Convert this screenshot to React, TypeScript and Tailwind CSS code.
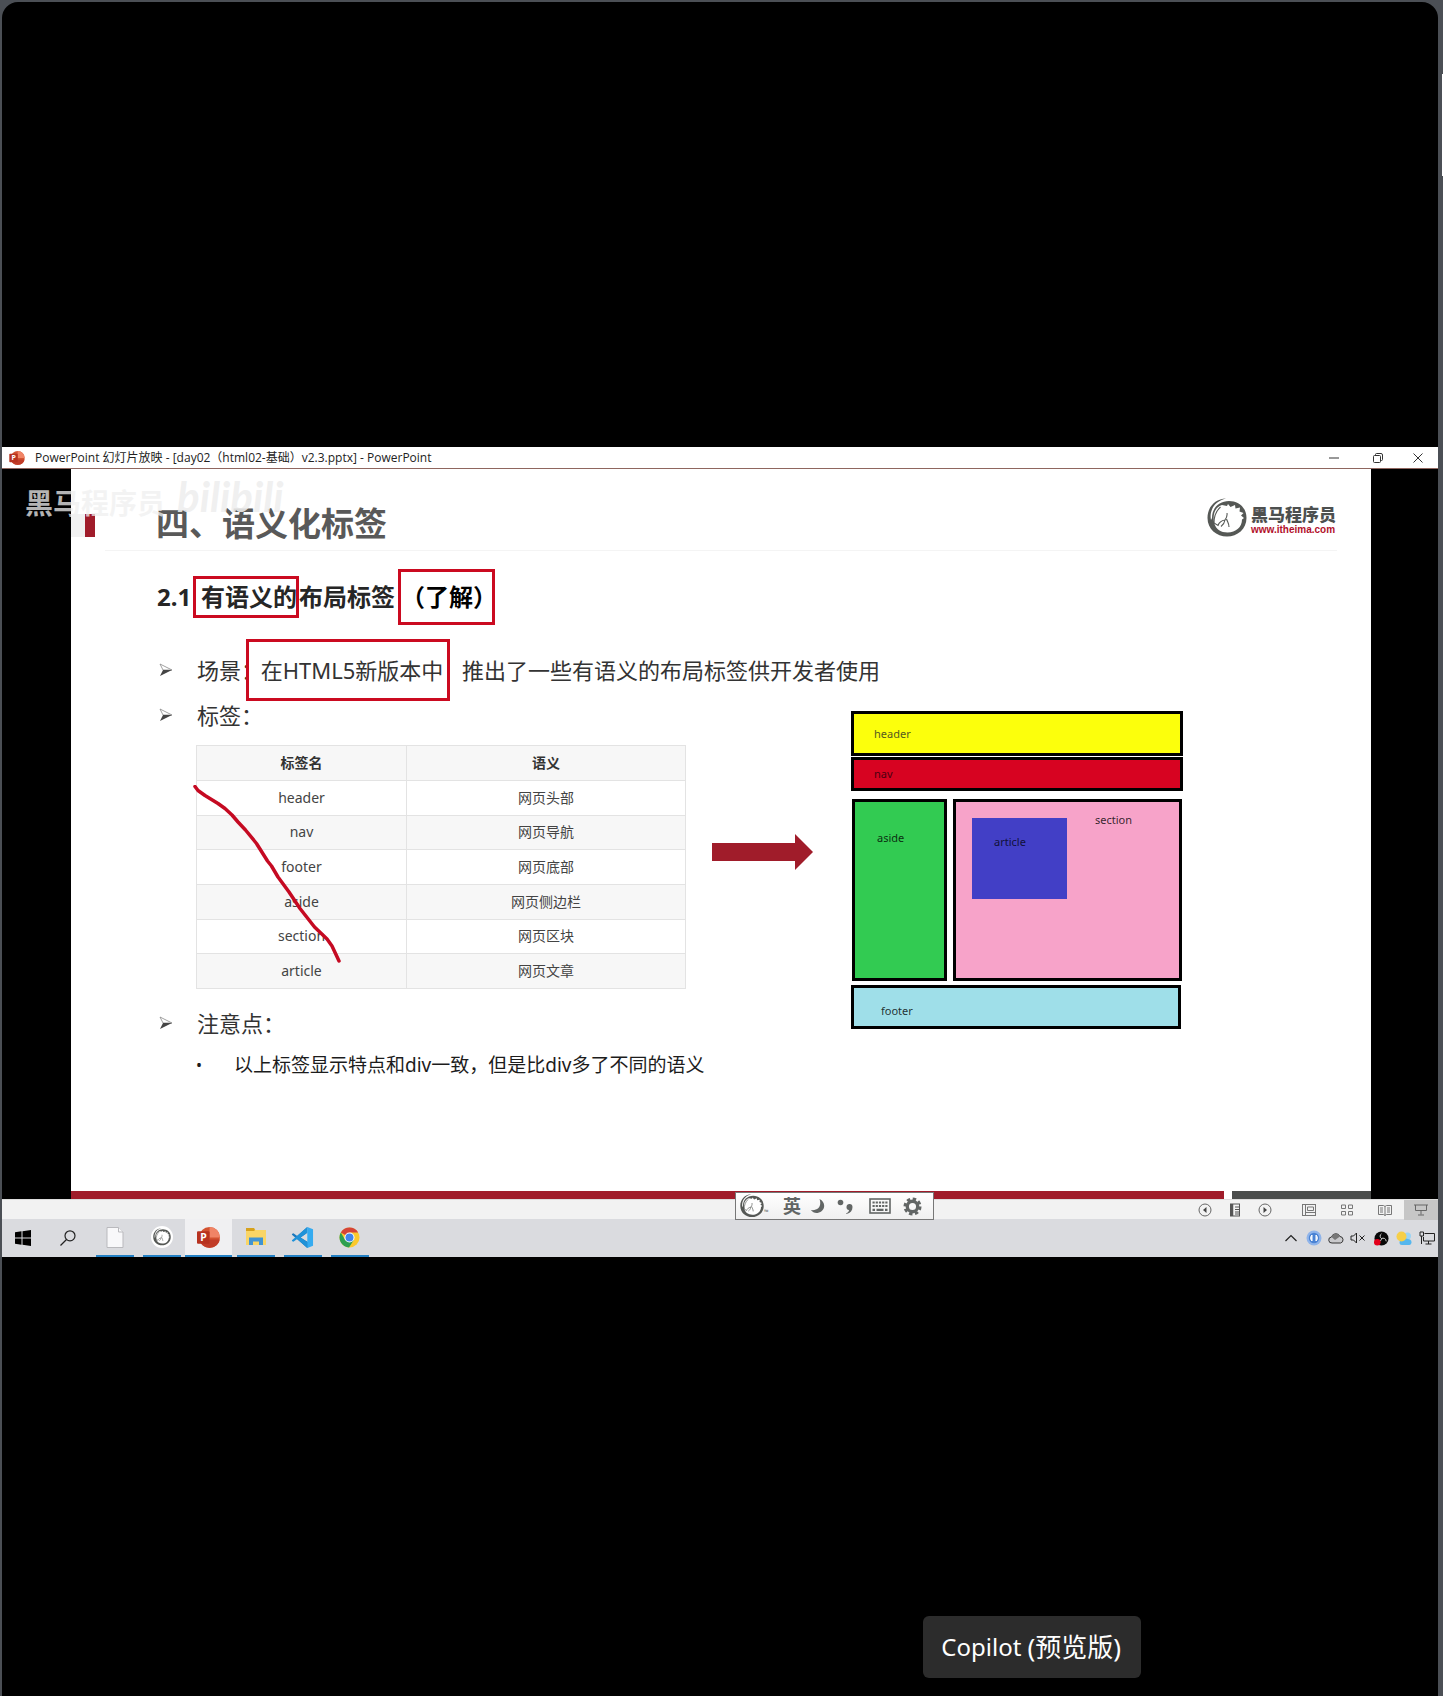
import React from 'react';

const tags = [
  ['header', '网页头部'],
  ['nav', '网页导航'],
  ['footer', '网页底部'],
  ['aside', '网页侧边栏'],
  ['section', '网页区块'],
  ['article', '网页文章'],
];

function HorseMark({ className }: { className: string }) {
  return (
    <svg viewBox="0 0 40 40" className={className} fill="none" aria-hidden="true">
      <path d="M19 .5C8 1 .5 9 .5 20c0 11 9 18.500 19.500 18.500S39.500 31 39.500 20 31 3 22 3C12 3 5 10 5 20l-1 2C2 12 8 3 19 .5Z" fill="#555855" />
      <path d="M7.500 26C5 17 8 9 15 7l5 1 1-2 2.500 3L28 7l.5 3.500L33 9.500l-.5 4 4 1.500-2.500 2.500 3 2.500-2 1.500C35 29 29 34.500 20.500 34.500 14 34.500 9 31 7.500 26Z" fill="#fff" />
      <path d="M13.500 9C9 13 7 19 7 25l4 2.500c1-3 3.500-5 7-5.500M20 15c.5 3-.5 5-2 7-.5 3-2 5-4 6.500M19.500 21c1 3 2.500 4.500 2.500 8" stroke="#555855" strokeWidth="1.100" />
    </svg>
  );
}

function PptIcon({ className }: { className: string }) {
  return (
    <svg viewBox="0 0 22 20" className={className} aria-hidden="true">
      <circle cx="12" cy="10" r="10" fill="#d35230" />
      <path d="M12 0a10 10 0 0 1 10 10H12Z" fill="#f08466" />
      <path d="M2.3 12h19.5A10 10 0 0 1 2.3 12Z" fill="#c13c28" />
      <rect x="0" y="4" width="12" height="12" rx="1" fill="#b7321f" />
      <text x="3" y="13.5" fontSize="10" fontWeight="700" fill="#fff" fontFamily="Noto Sans, sans-serif">P</text>
    </svg>
  );
}

function Arrowhead() {
  return (
    <svg viewBox="0 0 14 14" className="h-3.5 w-3.5" aria-hidden="true">
      <path d="M1 1 13 7 4 7Z" fill="#fff" stroke="#888" strokeWidth="0.8" />
      <path d="M4 7h9L1 13Z" fill="#444" />
    </svg>
  );
}

function Bullet({ children }: { children: React.ReactNode }) {
  return (
    <>
      <span className="flex w-10 shrink-0 items-center pl-0.5"><Arrowhead /></span>
      {children}
    </>
  );
}

function TitleBar() {
  return (
    <header className="flex h-[22px] items-center border-b border-[#8f665f] bg-white text-[#222]">
      <PptIcon className="ml-[7px] h-3.5 w-4" />
      <h1 className="ml-2.5 flex-1 truncate font-['Open_Sans','Noto_Sans_CJK_SC',sans-serif] text-[12px] leading-5">PowerPoint 幻灯片放映 - [day02（html02-基础）v2.3.pptx] - PowerPoint</h1>
      <button aria-label="最小化" className="flex h-5 w-11 items-center justify-center">
        <svg viewBox="0 0 10 10" className="h-2.5 w-2.5" stroke="#333" fill="none"><path d="M0 5h10" /></svg>
      </button>
      <button aria-label="还原" className="flex h-5 w-[43px] items-center justify-center">
        <svg viewBox="0 0 10 10" className="h-2.5 w-2.5" stroke="#333" fill="none"><rect x=".5" y="2.5" width="7" height="7" rx="1" /><path d="M2.5 2.5V1.500a1 1 0 0 1 1-1H8a1.500 1.500 0 0 1 1.500 1.500v4.500a1 1 0 0 1-1 1h-1" /></svg>
      </button>
      <button aria-label="关闭" className="mr-px flex h-5 w-[38px] items-center justify-center">
        <svg viewBox="0 0 10 10" className="h-2.5 w-2.5" stroke="#333" fill="none"><path d="m.5.5 9 9m0-9-9 9" /></svg>
      </button>
    </header>
  );
}

function TagTable() {
  return (
    <table className="h-[244px] w-[490px] table-fixed border-collapse text-center text-[14px] leading-5 text-[#444]">
      <thead>
        <tr className="h-[35px] bg-[#f7f7f7] text-[#333]">
          <th className="w-[210px] border border-[#e3e3e3] p-0 font-bold">标签名</th>
          <th className="border border-[#e3e3e3] p-0 font-bold">语义</th>
        </tr>
      </thead>
      <tbody>
        {tags.map(([tag, meaning]) => (
          <tr key={tag} className="h-[34px] even:bg-[#f7f7f7]">
            <td className="border border-[#e3e3e3] p-0">{tag}</td>
            <td className="border border-[#e3e3e3] p-0">{meaning}</td>
          </tr>
        ))}
      </tbody>
    </table>
  );
}

function LayoutDiagram() {
  return (
    <div className="mt-3 flex w-[332px] shrink-0 flex-col text-[11px] leading-4 text-black/80">
      <div className="flex h-[45px] items-center border-3 border-black bg-[#fcff0c] pl-5 text-[#555a20]">header</div>
      <div className="mt-px flex h-[34px] items-center border-3 border-black bg-[#d70321] pl-5 text-[#4a0010]">nav</div>
      <div className="mt-2 flex h-[182px] gap-1.5 px-px">
        <div className="w-[95px] border-3 border-black bg-[#32cb52] pt-7 pl-[22px]">aside</div>
        <div className="flex flex-1 border-3 border-black bg-[#f7a3c9] pl-4">
          <div className="mt-4 h-[81px] w-[95px] bg-[#423fc6] pt-4 pl-[22px] text-[#111138]">article</div>
          <div className="mt-2.5 ml-7 h-5">section</div>
        </div>
      </div>
      <div className="mt-1 mr-0.5 flex h-11 items-center border-3 border-black bg-[#9fdfe9] pt-2 pl-[27px]">footer</div>
    </div>
  );
}

function Slide() {
  return (
    <main className="bg-black pr-[67px] pl-[69px]">
      <div className="relative bg-white text-[#333]">
        <div className="flex h-[81px] items-center">
          <div className="mt-[45px] flex h-[23px] w-[85px] self-start">
            <span className="w-3.5 bg-[#f1f1f1]" />
            <span className="w-2.5 bg-[#a01c2a]" />
          </div>
          <h2 className="flex-1 pt-7 text-[33px] leading-10 font-bold text-[#595959]">四、语义化标签</h2>
          <a href="#home" className="mr-[35px] flex items-center gap-1 pt-4">
            <HorseMark className="h-10 w-10" />
            <span className="flex flex-col pt-1">
              <span className="text-[17px] leading-5 font-black text-[#4d504f]">黑马程序员</span>
              <span className="font-['Liberation_Sans'] text-[10px] leading-2.5 font-bold text-[#b2102b]">www.itheima.com</span>
            </span>
          </a>
        </div>
        <div className="mr-[34px] ml-[34px] h-px bg-[#f4f4f4]" />

        <div className="pl-[86px]">
          <h3 className="flex h-[91px] items-center text-[24px] leading-8 font-bold text-[#262626]">
            <span className="w-11">2.1</span>
            <span className="relative">
              有语义的
              <span className="absolute -inset-y-[5px] -right-0.5 -left-2 border-3 border-[#cb0a20]" />
            </span>
            <span className="ml-0.5">布局标签</span>
            <span className="ml-[3px] flex h-14 w-[97px] items-center justify-center border-3 border-[#cb0a20] text-black"><span>（了解）</span></span>
          </h3>

          <p className="flex h-[55px] items-center text-[22px] leading-8">
            <Bullet>
              <span className="w-[49px] whitespace-nowrap">场景：</span>
              <span className="relative flex h-[62px] w-[204px] shrink-0 items-center justify-center border-3 border-[#cb0a20] bg-white whitespace-nowrap"><span className="pl-2">在HTML5新版本中</span></span>
              <span className="ml-3 whitespace-nowrap">推出了一些有语义的布局标签供开发者使用</span>
            </Bullet>
          </p>

          <div className="mt-0.5 flex items-start">
            <div className="w-[555px] shrink-0 pb-28">
              <p className="flex h-8 items-center text-[22px]"><Bullet>标签：</Bullet></p>
              <div className="relative mt-3.5 ml-[39px]">
                <TagTable />
                <svg viewBox="0 0 148 180" className="absolute top-10 -left-[3px] h-[180px] w-[148px]" fill="none" aria-hidden="true">
                  <path d="M2 1.500 5 5.500 12 10.500 25 18.500 32 23.500 39 30 45 37 52.500 45 63.500 58.500 74.500 76 78.500 81 85 92 96 107 107 123.500 121.500 142 134 154 139 161 146 176" stroke="#c50a22" strokeWidth="3.500" strokeLinecap="round" strokeLinejoin="round" />
                </svg>
              </div>
              <p className="mt-[18px] flex h-8 items-center text-[22px]"><Bullet>注意点：</Bullet></p>
              <p className="mt-3 flex h-7 items-center pl-[39px] text-[19px] leading-7 whitespace-nowrap text-[#1c1c1c]">
                <span className="w-[38px] text-[16px]">•</span>
                以上标签显示特点和div一致，但是比div多了不同的语义
              </p>
            </div>
            <svg viewBox="0 0 101 36" className="mt-[135px] mr-[38px] h-9 w-[101px] shrink-0" aria-hidden="true">
              <path d="M0 9h83V0l18 18-18 18v-9H0Z" fill="#a01c2a" />
            </svg>
            <LayoutDiagram />
          </div>
        </div>

        <div className="flex h-2 gap-2">
          <span className="flex-1 bg-[#a01c2a]" />
          <span className="w-[139px] bg-[#4c4e4d]" />
        </div>

        <div className="absolute top-1 -left-[46px] flex items-center gap-3 whitespace-nowrap">
          <span className="pt-3.5 text-[28px] leading-8 font-bold text-[#f0f0f0]/75">黑马程序员</span>
          <span className="font-['Lato'] text-[42px] leading-10 font-bold text-[#eeeeee]/90 italic">bilibili</span>
        </div>
      </div>
    </main>
  );
}

const viewBtn = 'flex h-5 items-center justify-center';

function StatusBar() {
  return (
    <div className="flex h-5 items-center justify-end border-t border-[#ddd] bg-[#f2f2f2]">
      <button aria-label="上一张" className={viewBtn + ' w-[30px]'}>
        <svg viewBox="0 0 14 14" className="h-3.5 w-3.5" stroke="#666" fill="none"><circle cx="7" cy="7" r="6" /><path d="M8.500 4v6L5 7Z" fill="#444" stroke="none" /></svg>
      </button>
      <button aria-label="菜单" className={viewBtn + ' w-[30px]'}>
        <svg viewBox="0 0 12 14" className="h-3.5 w-3" stroke="#555" fill="none"><rect x="1.500" y="1" width="9" height="12" /><path d="M3 1v12" strokeWidth="2.500" /><path d="M6 4h4M6 6.500h4M6 9h4M6 11h4" /></svg>
      </button>
      <button aria-label="下一张" className={viewBtn + ' w-[30px]'}>
        <svg viewBox="0 0 14 14" className="h-3.5 w-3.5" stroke="#666" fill="none"><circle cx="7" cy="7" r="6" /><path d="M5.500 4v6L9 7Z" fill="#444" stroke="none" /></svg>
      </button>
      <button aria-label="普通视图" className={viewBtn + ' ml-[10px] w-[38px]'}>
        <svg viewBox="0 0 14 12" className="h-3 w-3.5" stroke="#777" fill="none"><rect x=".5" y=".5" width="13" height="11" /><path d="M3.500.5v11M3.500 8.500h10M5.500 3h6v3.500h-6Z" /></svg>
      </button>
      <button aria-label="幻灯片浏览" className={viewBtn + ' w-[38px]'}>
        <svg viewBox="0 0 12 12" className="h-3 w-3" stroke="#777" fill="none"><path d="M.5 1h4v3.500h-4ZM7.500 1h4v3.500h-4ZM.5 7.500h4V11h-4ZM7.500 7.500h4V11h-4Z" /></svg>
      </button>
      <button aria-label="阅读视图" className={viewBtn + ' w-[38px]'}>
        <svg viewBox="0 0 14 12" className="h-3 w-3.5" stroke="#777" fill="none"><path d="M.5 1.500h5L7 2.500l1.500-1h5v9h-5l-1.500 1-1.500-1h-5ZM7 2.500v9M2 4h3M2 6h3M2 8h3M9 4h3M9 6h3M9 8h3" /></svg>
      </button>
      <button aria-label="幻灯片放映" className={viewBtn + ' w-[34px] bg-[#c6c6c6]'}>
        <svg viewBox="0 0 14 12" className="h-3 w-3.5" stroke="#666" fill="none"><path d="M0 1h14M1.500 1v5.500h11V1M7 6.500v4M4 11h6" /></svg>
      </button>
    </div>
  );
}

function TaskButton({ label, active, children }: { label: string; active?: boolean; children: React.ReactNode }) {
  return (
    <button aria-label={label} className={active ? 'flex h-[38px] w-[47px] flex-col items-center bg-[#f0f0f2]' : 'flex h-[38px] w-[47px] flex-col items-center'}>
      <span className="flex flex-1 items-center justify-center">{children}</span>
      <span className={active ? 'h-0.5 w-full bg-[#2380c4]' : 'h-0.5 w-[38px] bg-[#2380c4]'} />
    </button>
  );
}

function Taskbar() {
  return (
    <footer className="flex h-[38px] items-center bg-[#dadbdf]">
      <button aria-label="开始" className="flex h-full w-[42px] items-center justify-center">
        <svg viewBox="0 0 16 16" className="h-4 w-4" fill="#000"><path d="M0 2.300 6.500 1.300V7.500H0ZM7.500 1.200 16 0v7.500H7.500ZM0 8.500h6.500v6.200L0 13.700ZM7.500 8.500H16V16l-8.500-1.200Z" /></svg>
      </button>
      <button aria-label="搜索" className="flex h-full w-[47px] items-center justify-center">
        <svg viewBox="0 0 16 16" className="h-4 w-4" fill="none" stroke="#222" strokeWidth="1.200"><circle cx="10" cy="5.800" r="5" /><path d="M6.500 9.500.5 15.500" /></svg>
      </button>
      <TaskButton label="文档">
        <svg viewBox="0 0 18 21" className="h-[21px] w-[18px]" fill="#f8f8fa" stroke="#b9b9bd"><path d="M1 .5h11.500L17 5v15.500H1Z" /><path d="M12.500.5V5H17" /></svg>
      </TaskButton>
      <TaskButton label="黑马">
        <span className="flex h-[22px] w-[22px] items-center justify-center rounded-full bg-white"><HorseMark className="h-[18px] w-[18px]" /></span>
      </TaskButton>
      <TaskButton label="PowerPoint" active><PptIcon className="h-[21px] w-[23px]" /></TaskButton>
      <TaskButton label="文件资源管理器">
        <svg viewBox="0 0 22 20" className="h-5 w-[22px]"><path d="M1 1h8l1.500 2H21v15H1Z" fill="#f9d566" /><path d="M1 1h8l1 2-1 1H1Z" fill="#d6a11d" /><path d="M4 18v-7.500h14V18h-4v-3.500H8V18Z" fill="#3f93d3" /></svg>
      </TaskButton>
      <TaskButton label="Visual Studio Code">
        <svg viewBox="0 0 24 24" className="h-[23px] w-[23px]"><path d="M17 1 6.500 10.500 2.500 7.500 1 8.300v.9L17 23l1-1V17L10 12l7-5Z" fill="#1b78bd" /><path d="M17 23 6.500 13.500 2.500 16.500 1 15.700v-.9L17 1v6L10 12l7 5Z" fill="#2092d8" /><path d="m17 1 6 2.500v17L17 23Z" fill="#35abf0" /></svg>
      </TaskButton>
      <TaskButton label="Chrome">
        <svg viewBox="0 0 22 22" className="h-[21px] w-[21px]"><circle cx="11" cy="11" r="10.500" fill="#fbc92d" /><path d="M11 11 1.900 5.800A10.500 10.500 0 0 1 20.100 5.800H11Z" fill="#d54437" /><path d="M1.900 5.800A10.500 10.500 0 0 0 10.500 21.500L15.500 13.600 11 11 6.500 13.600Z" fill="#2d9f51" /><circle cx="11" cy="11" r="5.300" fill="#fff" /><circle cx="11" cy="11" r="4.200" fill="#4285ec" /></svg>
      </TaskButton>

      <div className="ml-auto flex h-full items-center">
        <button aria-label="显示隐藏的图标" className="flex w-[23px] justify-center">
          <svg viewBox="0 0 12 12" className="h-3 w-3" fill="none" stroke="#222" strokeWidth="1.200"><path d="m.5 9 5.500-5.500L11.500 9" /></svg>
        </button>
        <button aria-label="暂停" className="flex w-[23px] justify-center">
          <svg viewBox="0 0 16 16" className="h-4 w-4"><circle cx="8" cy="8" r="7.500" fill="#8fb4ea" /><circle cx="8" cy="8" r="5.200" fill="#4a83d4" /><path d="M6 5v6a4 4 0 0 1 0-6ZM10 5v6a4 4 0 0 0 0-6Z" fill="#dbe8fb" stroke="#fff" /></svg>
        </button>
        <button aria-label="云同步" className="flex w-[22px] justify-center">
          <svg viewBox="0 0 16 12" className="h-3 w-4"><path d="M4 11a3 3 0 0 1-.5-6A4.500 4.500 0 0 1 12 4.500 3.300 3.300 0 0 1 12.500 11Z" fill="#c9c9cc" stroke="#333" /><path d="M3.500 5A4.500 4.500 0 0 1 12 4.500L7 8Z" fill="#777" /></svg>
        </button>
        <button aria-label="静音" className="flex w-[22px] justify-center">
          <svg viewBox="0 0 16 12" className="h-3 w-4" fill="none" stroke="#222"><path d="M1 4h2.500L6.500 1v10L3.500 8H1ZM9.500 3.500l5 5m0-5-5 5" /></svg>
        </button>
        <button aria-label="录制" className="flex w-6 justify-center">
          <svg viewBox="0 0 16 16" className="h-[15px] w-[15px]"><circle cx="8" cy="8" r="7.500" fill="#080808" /><path d="M8 8c-2-1-2-4 0-5M8 8c2-1 5 0 5 3M8 8c0 2-2 4-4 3" stroke="#ddd" fill="none" /><circle cx="3.500" cy="12" r="3.500" fill="#e3001b" /></svg>
        </button>
        <button aria-label="天气" className="flex w-[22px] justify-center">
          <svg viewBox="0 0 16 16" className="h-4 w-4"><circle cx="11.500" cy="6" r="3.500" fill="#9bd4f5" /><path d="M6 15a2.500 2.500 0 0 1 0-5l4-1.500 4 1a3 3 0 0 1-.5 5.500Z" fill="#55b7ee" /><circle cx="5.500" cy="6.500" r="5" fill="#f6cf48" /></svg>
        </button>
        <button aria-label="网络" className="flex w-[23px] justify-center">
          <svg viewBox="0 0 16 14" className="h-3.5 w-4" fill="none" stroke="#222"><path d="M5.500 2.500h10v7.500h-11V6M9.500 10v3M6.500 13h6M1 1h3.500v4H1ZM2.500 5v8" /></svg>
        </button>
      </div>
    </footer>
  );
}

function ImeBar() {
  return (
    <div className="absolute right-[504px] bottom-[37px] flex h-7 w-[199px] items-center border border-[#777] bg-gradient-to-b from-white to-[#f0f0f0] text-[#626665]">
      <button aria-label="输入法" className="ml-1 w-6"><HorseMark className="h-6 w-6" /></button>
      <span className="mt-3 w-2 text-[6px]">™</span>
      <button className="ml-2 w-6 text-[18px] leading-6 font-bold">英</button>
      <button aria-label="半角" className="ml-0.5 flex w-6 justify-center">
        <svg viewBox="0 0 16 16" className="h-4 w-4" fill="#626665"><path d="M9.500 1c7 3 6 13-2 14-3 .3-5-1-6.500-3 7 1 11-4 8.500-11Z" /></svg>
      </button>
      <button aria-label="标点" className="flex w-[30px] justify-center">
        <svg viewBox="0 0 16 16" className="h-4 w-4" fill="#626665"><circle cx="3.500" cy="4.500" r="2.800" /><path d="M9 15.500c2-1 3-2 3-3.500A3 3 0 1 1 15.500 9c0 3.500-2 6-6 7Z" /></svg>
      </button>
      <button aria-label="软键盘" className="ml-1.5 flex w-7 justify-center">
        <svg viewBox="0 0 22 16" className="h-4 w-[22px]" fill="none" stroke="#626665"><rect x="1" y="1" width="20" height="14" strokeWidth="1.600" /><path d="M3.500 4.500h15M3.500 8h15" strokeWidth="2.200" strokeDasharray="2.200 1" /><path d="M3.500 11.800h2.500M7.500 11.800h7M16 11.800h2.500" strokeWidth="2.200" /></svg>
      </button>
      <button aria-label="设置" className="ml-1 flex w-7 justify-center">
        <svg viewBox="0 0 20 20" className="h-[19px] w-[19px]" fill="none" stroke="#626665"><circle cx="10" cy="10" r="5.500" strokeWidth="3.500" /><circle cx="10" cy="10" r="8" strokeWidth="3" strokeDasharray="3.600 2.683" /></svg>
      </button>
    </div>
  );
}

export default function App() {
  return (
    <div className="relative min-h-screen bg-[#4b4f55] pt-0.5 pr-[5px] pl-0.5 font-['Noto_Sans','Noto_Sans_CJK_SC',sans-serif]">
      <span className="absolute top-[74px] right-0 h-[102px] w-px bg-white" />
      <div className="relative flex min-h-[1694px] flex-col rounded-t-2xl bg-black pt-[445px]">
        <div className="relative">
          <TitleBar />
          <Slide />
          <StatusBar />
          <Taskbar />
          <ImeBar />
        </div>
        <div className="mt-auto mr-[297px] mb-[18px] flex items-center gap-1.5 self-end rounded-md bg-[#2c2c2c] pr-5 pl-[18px] py-[15px] text-[24px] leading-8 text-white" role="tooltip">
          <span>Copilot</span>
          <span className="text-[26px]">(预览版)</span>
        </div>
      </div>
    </div>
  );
}
